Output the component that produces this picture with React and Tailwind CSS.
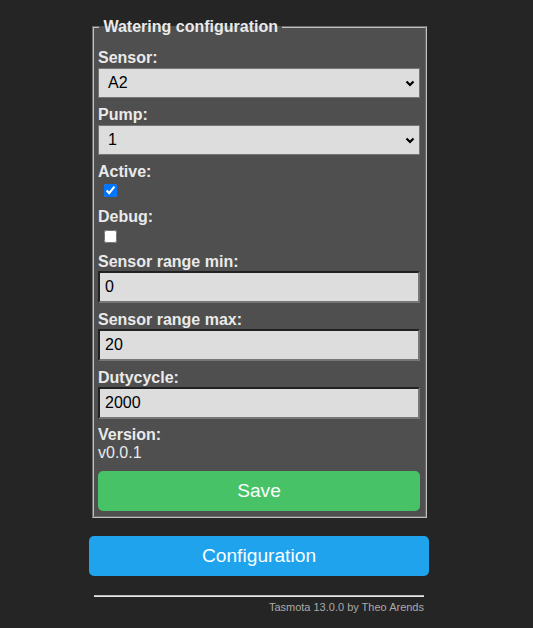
import React from "react";

function Chevron() {
  return (
    <svg
      className="pointer-events-none absolute right-[5px] top-[12px]"
      width="10"
      height="7"
      viewBox="0 0 10 7"
    >
      <polyline
        points="1.5,1.5 5,5 8.5,1.5"
        fill="none"
        stroke="#000"
        strokeWidth="2.2"
      />
    </svg>
  );
}

function Select({ value, options }) {
  return (
    <div className="relative mt-[1px] h-[30px]">
      <select
        defaultValue={value}
        className="block h-[30px] w-full appearance-none rounded-none border border-[#767676] bg-[#dddddd] pl-[9px] pr-[20px] text-[16px] leading-[18px] text-black outline-none"
      >
        {options.map((o) => (
          <option key={o} value={o}>
            {o}
          </option>
        ))}
      </select>
      <Chevron />
    </div>
  );
}

function TextInput({ value }) {
  return (
    <input
      type="text"
      defaultValue={value}
      className="block h-[32px] w-full border-2 border-[#767676] bg-[#dddddd] px-[5px] text-[16px] leading-[18px] text-black outline-none [border-style:inset]"
    />
  );
}

function Label({ children, className = "" }) {
  return (
    <div className={"h-[18px] text-[16px] font-bold leading-[18px] " + className}>
      {children}
    </div>
  );
}

export default function App() {
  return (
    <div className="min-h-screen w-full bg-[#252525] font-['Liberation_Sans',Arial,sans-serif] text-[#eaeaea]">
      <div className="flex w-[518px] justify-center pt-[18px]">
        <div className="flex w-[340px] flex-col">
          <fieldset className="ml-[3px] w-[335px] border-2 border-[#c0c0c0] bg-[#4f4f4f] pb-[5px] pl-[4px] pr-[5px] [border-style:groove]">
            <legend className="ml-[1px] h-[18px] text-[16px] font-bold leading-[18px]">
              &nbsp;Watering configuration&nbsp;
            </legend>
            <div className="flex flex-col">
              <Label className="mt-[13px]">Sensor:</Label>
              <Select value="A2" options={["A0", "A1", "A2", "A3"]} />

              <Label className="mt-[8px]">Pump:</Label>
              <Select value="1" options={["1", "2", "3", "4"]} />

              <Label className="mt-[8px]">Active:</Label>
              <div className="mt-[3px] flex h-[13px]">
                <input
                  type="checkbox"
                  defaultChecked
                  className="m-0 ml-[6px] h-[13px] w-[13px]"
                />
              </div>

              <Label className="mt-[11px]">Debug:</Label>
              <div className="mt-[4px] flex h-[13px]">
                <input
                  type="checkbox"
                  className="m-0 ml-[6px] h-[13px] w-[13px]"
                />
              </div>

              <Label className="mt-[10px]">Sensor range min:</Label>
              <TextInput value="0" />

              <Label className="mt-[8px]">Sensor range max:</Label>
              <TextInput value="20" />

              <Label className="mt-[8px]">Dutycycle:</Label>
              <TextInput value="2000" />

              <Label className="mt-[7px]">Version:</Label>
              <div className="h-[18px] text-[16px] leading-[18px]">v0.0.1</div>

              <button className="mt-[9px] h-[40px] w-full rounded-[5px] bg-[#47c266] text-[19.2px] leading-[40px] text-[#faffff]">
                Save
              </button>
            </div>
          </fieldset>

          <button className="mt-[18px] h-[40px] w-full rounded-[5px] bg-[#1fa3ec] text-[19.2px] leading-[40px] text-[#faffff]">
            Configuration
          </button>

          <div className="mx-[5px] mt-[19px] flex flex-col">
            <div className="h-[2px] border-t border-b border-t-[#bdbdbd] border-b-[#e6e6e6]" />
            <div className="mt-[4px] text-right text-[11px] leading-[13px] text-[#aaaaaa]">
              Tasmota 13.0.0 by Theo Arends
            </div>
          </div>
        </div>
      </div>
    </div>
  );
}
